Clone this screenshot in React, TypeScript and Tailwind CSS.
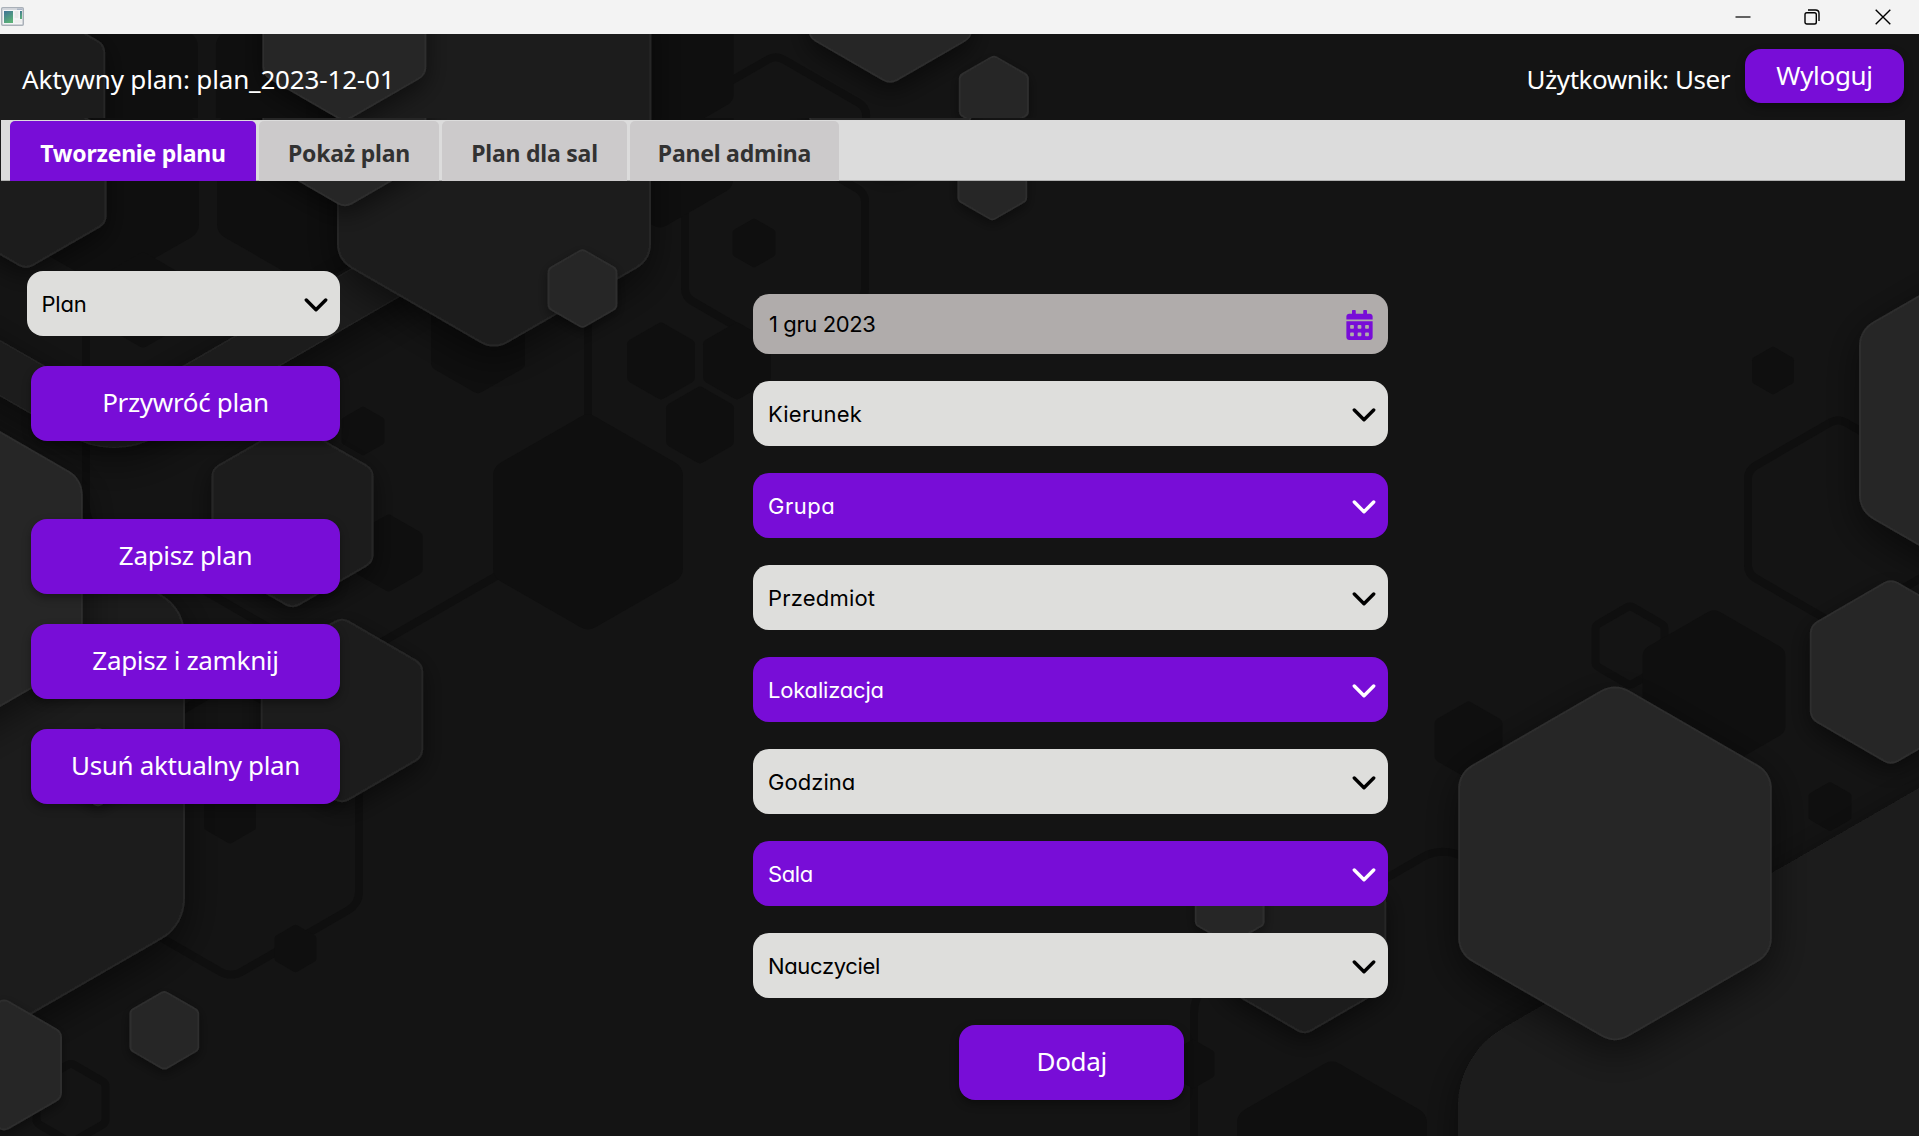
import React from "react";
import { FaCalendarAlt } from "react-icons/fa";

type Hex = [cx: number, cy: number, halfWidth: number];

/* Pointy-top regular hexagon with rounded corners. */
function hexPath(cx: number, cy: number, hw: number, corner = hw / 6) {
  const R = hw / 0.866;
  const pts = [
    [cx, cy - R],
    [cx + hw, cy - R / 2],
    [cx + hw, cy + R / 2],
    [cx, cy + R],
    [cx - hw, cy + R / 2],
    [cx - hw, cy - R / 2],
  ];
  const k = (corner * 0.577) / R;
  let d = "";
  pts.forEach((p, i) => {
    const prev = pts[(i + 5) % 6];
    const next = pts[(i + 1) % 6];
    const a = [p[0] + (prev[0] - p[0]) * k, p[1] + (prev[1] - p[1]) * k];
    const b = [p[0] + (next[0] - p[0]) * k, p[1] + (next[1] - p[1]) * k];
    d += `${i ? "L" : "M"}${a[0].toFixed(1)} ${a[1].toFixed(1)}A${corner.toFixed(1)} ${corner.toFixed(1)} 0 0 1 ${b[0].toFixed(1)} ${b[1].toFixed(1)}`;
  });
  return d + "Z";
}

const darkHexes: Hex[] = [
  [660, 145, 73],
  [754, 243, 21.5],
  [478, 340, 47],
  [588, 522, 95],
  [661, 361, 34],
  [737, 361, 34],
  [700, 425, 34],
  [363, 431, 21.5],
  [388.6, 553, 34],
  [104, 178, 95],
  [312, 178, 95],
  [143, 300, 42],
  [230, 814, 26],
  [295.5, 948.5, 21],
  [1773, 370.5, 21],
  [1714, 691, 71.5],
  [1468.5, 740, 34],
  [1830, 806.5, 21.5],
  [1193, 1064, 21.5],
  [1332, 1169, 95],
];

const outlineHexes: Hex[] = [
  [775, 245, 90],
  [231, 830, 128],
  [71, 1103, 34.5],
  [1838, 522, 90],
  [1630, 645.5, 34.5],
  [1443, 1133, 249],
];

const midHexes: Hex[] = [
  [494, 169.5, 156],
  [26, 177, 79.7],
  [292.5, 515.6, 80.2],
  [342, 710.5, 80.2],
  [-90, 767, 274],
  [1304.5, 941, 80.7],
  [1998, 1366, 540],
];

const lightHexes: Hex[] = [
  [345, 114, 80.7],
  [582.5, 288.5, 33.9],
  [889, 76.5, 80.7],
  [992.3, 181, 33.9],
  [-73.5, 569, 155.2],
  [98, 767, 33.9],
  [164.3, 1030.3, 33.9],
  [4, 1065, 57],
  [2016, 420.5, 156],
  [1891, 672, 80.2],
  [1615, 863.3, 155.8],
  [1229.7, 905, 33.9],
];

function shadowFor(hw: number) {
  return hw < 60 ? "url(#shadow-s)" : hw < 120 ? "url(#shadow-m)" : "url(#shadow-l)";
}

const bandPath = "M-80 322L78 413Q114 434 150 413L470 228";

function Honeycomb() {
  return (
    <svg className="absolute inset-0 h-full w-full" viewBox="0 0 1919 1136" preserveAspectRatio="none">
      <defs>
        <filter id="shadow-s" x="-50%" y="-50%" width="200%" height="200%">
          <feDropShadow dx="0" dy="4" stdDeviation="6" floodColor="#000" floodOpacity="0.4" />
        </filter>
        <filter id="shadow-m" x="-50%" y="-50%" width="200%" height="200%">
          <feDropShadow dx="0" dy="8" stdDeviation="12" floodColor="#000" floodOpacity="0.5" />
        </filter>
        <filter id="shadow-l" x="-50%" y="-50%" width="200%" height="200%">
          <feDropShadow dx="0" dy="12" stdDeviation="20" floodColor="#000" floodOpacity="0.55" />
        </filter>
        <clipPath id="clip-header">
          <rect x="0" y="34" width="1919" height="84" />
        </clipPath>
        <clipPath id="clip-seam">
          <rect x="0" y="118" width="1919" height="2" />
        </clipPath>
        <g id="comb">
          <rect x="-10" y="0" width="1940" height="1300" fill="#141414" />
          <g fill="none" stroke="#0f0f0f" strokeWidth="8">
            {outlineHexes.map(([x, y, w]) => (
              <path key={`${x}-${y}`} d={hexPath(x, y, w)} />
            ))}
            <path d="M86 300V508Q86 522 98 529L290 640" />
            <path d="M588 300V420" />
            <path d="M500 574L290 695" />
          </g>
          <g fill="#0f0f0f">
            {darkHexes.map(([x, y, w]) => (
              <path key={`${x}-${y}`} d={hexPath(x, y, w)} />
            ))}
          </g>
          <g fill="none" filter="url(#shadow-l)">
            <path d={bandPath} stroke="#232323" strokeWidth="49" />
            <path d={bandPath} stroke="#1d1d1d" strokeWidth="46" />
          </g>
          {midHexes.map(([x, y, w]) => (
            <path key={`${x}-${y}`} d={hexPath(x, y, w)} fill="#1f1f1f" stroke={w > 400 ? "none" : "#252525"} strokeWidth="2" filter={shadowFor(w)} />
          ))}
          {lightHexes.map(([x, y, w]) => (
            <path key={`${x}-${y}`} d={hexPath(x, y, w)} fill="#272727" stroke="#2d2d2d" strokeWidth="2" filter={shadowFor(w)} />
          ))}
        </g>
      </defs>
      <use href="#comb" />
      <g clipPath="url(#clip-header)">
        <use href="#comb" transform="matrix(1.0035 0 0 1 -1.9 -86)" />
      </g>
      <g clipPath="url(#clip-seam)">
        <use href="#comb" transform="matrix(1.0035 0 0 1 -1.9 -2)" />
      </g>
    </svg>
  );
}

function AppIcon() {
  return (
    <svg className="ml-px h-[19px] w-[23px]" viewBox="0 0 23 19">
      <rect x="0.75" y="0.75" width="21.5" height="17.5" rx="1" fill="#f4f5f6" stroke="#a9b0b8" strokeWidth="1.5" />
      <path d="M1.5 1.5H21.5V3H1.5Z" fill="#d3d7dc" />
      <path d="M16 1.5H21.5V3H16Z" fill="#aab4c4" />
      <rect x="3" y="4" width="9" height="12" fill="url(#app-a)" />
      <rect x="13.5" y="4" width="4" height="7" fill="#e9e9e9" />
      <rect x="19" y="4" width="2" height="8" fill="url(#app-a)" />
      <rect x="13.5" y="13" width="7.5" height="3" fill="#eeeeee" />
      <defs>
        <linearGradient id="app-a" x1="0" y1="0" x2="0.5" y2="1">
          <stop offset="0" stopColor="#3f7296" />
          <stop offset="1" stopColor="#5bb078" />
        </linearGradient>
      </defs>
    </svg>
  );
}

function TitleBar() {
  return (
    <div className="relative flex h-[34px] items-center justify-between bg-[#f3f3f3] pb-px pr-7">
      <AppIcon />
      <div className="flex items-center text-black">
        <svg className="h-4 w-4" viewBox="0 0 16 16" fill="none" stroke="currentColor" strokeWidth="1.2">
          <path d="M0.5 8H15.5" />
        </svg>
        <svg className="ml-[53px] h-4 w-4" viewBox="0 0 16 16" fill="none" stroke="currentColor" strokeWidth="1.4">
          <rect x="1" y="3.7" width="11.3" height="11.3" rx="1.8" />
          <path d="M4 1H11.5Q15 1 15 4.5V12" />
        </svg>
        <svg className="ml-[55px] h-4 w-4" viewBox="0 0 16 16" fill="none" stroke="currentColor" strokeWidth="1.4">
          <path d="M0.7 0.7L15.3 15.3M15.3 0.7L0.7 15.3" />
        </svg>
      </div>
    </div>
  );
}

function Chevron() {
  return (
    <svg className="mt-0.5 h-4 w-6" viewBox="0 0 24 16" fill="none" stroke="currentColor" strokeWidth="3.4" strokeLinecap="round" strokeLinejoin="round">
      <path d="M2.3 3L12 12.8L21.7 3" />
    </svg>
  );
}

function FieldText({ label, tracking }: { label: string; tracking: string }) {
  return (
    <span className={`font-['Inter',sans-serif] text-[22px] font-normal leading-none [font-feature-settings:'cv11'] ${tracking}`}>
      {label}
    </span>
  );
}

function Select({ label, tracking, purple }: { label: string; tracking: string; purple?: boolean }) {
  return (
    <div
      className={`flex h-[65px] w-full items-center justify-between rounded-2xl pl-[15px] pr-3 ${purple ? "bg-[#780dd7] text-white" : "bg-[#dededc] text-black"}`}
    >
      <FieldText label={label} tracking={tracking} />
      <Chevron />
    </div>
  );
}

function ActionButton({ label, className }: { label: string; className: string }) {
  return (
    <button
      className={`flex items-center justify-center rounded-2xl bg-[#780dd7] pb-[3px] text-[26px] leading-none tracking-[-0.33px] text-white shadow-[0_4px_8px_rgba(0,0,0,0.35)] ${className}`}
    >
      {label}
    </button>
  );
}

function Tab({ label, className }: { label: string; className: string }) {
  return (
    <div className={`flex h-[60px] items-center justify-center rounded-t-[5px] pt-1 text-[23px] font-bold leading-none tracking-[-0.22px] whitespace-nowrap ${className}`}>
      {label}
    </div>
  );
}

const fields = [
  { label: "Kierunek", tracking: "tracking-[0.2px]" },
  { label: "Grupa", tracking: "tracking-[0.5px]" },
  { label: "Przedmiot", tracking: "tracking-[0.2px]" },
  { label: "Lokalizacja", tracking: "tracking-[-0.2px]" },
  { label: "Godzina", tracking: "tracking-[0.05px]" },
  { label: "Sala", tracking: "tracking-[-0.4px]" },
  { label: "Nauczyciel", tracking: "tracking-[-0.35px]" },
];

export default function App() {
  return (
    <div className="relative h-[1136px] w-[1919px] overflow-hidden bg-[#141414] font-['Noto_Sans',sans-serif]">
      <Honeycomb />
      <div className="relative flex h-full flex-col">
        <TitleBar />
        <header className="flex h-[86px] items-start justify-between pl-[22px] pr-[15px] pt-[15px] text-white">
          <div className="pt-3.5 text-[26px] leading-8 tracking-[-0.17px] whitespace-nowrap">Aktywny plan: plan_2023-12-01</div>
          <div className="flex items-start">
            <div className="mr-[15px] pt-3.5 text-[26px] leading-8 tracking-[-0.45px] whitespace-nowrap">Użytkownik: User</div>
            <ActionButton label="Wyloguj" className="h-[54px] w-[159px]" />
          </div>
        </header>
        <nav className="ml-px flex h-[61px] w-[1904px] items-end gap-[3px] border-b border-[#b0b0b0] bg-[#dcdcdc] pl-[9px]">
          <Tab label="Tworzenie planu" className="-mb-px w-[246px] bg-[#780dd7] text-white" />
          <Tab label="Pokaż plan" className="-mb-px w-[180px] bg-[#cccacb] text-[#323232]" />
          <Tab label="Plan dla sal" className="-mb-px w-[185px] bg-[#cccacb] text-[#323232]" />
          <Tab label="Panel admina" className="-mb-px w-[209px] bg-[#cccacb] text-[#323232]" />
        </nav>
        <main className="flex">
          <aside className="flex w-[340px] flex-col items-end pt-[90px]">
            <div className="w-[313.5px]">
              <Select label="Plan" tracking="tracking-[-0.2px]" />
            </div>
            <ActionButton label="Przywróć plan" className="mt-[30px] h-[75px] w-[309px]" />
            <ActionButton label="Zapisz plan" className="mt-[78px] h-[75px] w-[309px]" />
            <ActionButton label="Zapisz i zamknij" className="mt-[30px] h-[75px] w-[309px]" />
            <ActionButton label="Usuń aktualny plan" className="mt-[30px] h-[75px] w-[309px]" />
          </aside>
          <section className="ml-[413px] flex w-[634.5px] flex-col items-center gap-[27px] pt-[113px]">
            <div className="flex h-[60px] w-full items-center justify-between rounded-2xl bg-[#b0acab] pl-4 pr-[15px] text-black">
              <FieldText label="1 gru 2023" tracking="tracking-[-0.4px]" />
              <FaCalendarAlt className="mt-0.5 h-[30px] w-[27px] text-[#780dd7]" />
            </div>
            {fields.map((f, i) => (
              <Select key={f.label} label={f.label} tracking={f.tracking} purple={i % 2 === 1} />
            ))}
            <ActionButton label="Dodaj" className="ml-[3px] h-[75px] w-[225px]" />
          </section>
        </main>
      </div>
    </div>
  );
}
